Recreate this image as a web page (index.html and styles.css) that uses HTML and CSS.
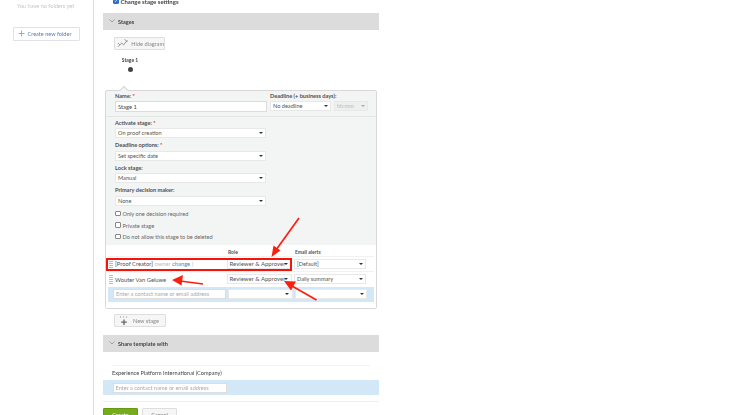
FILE: index.html
```html
<!DOCTYPE html>
<html lang="en">
<head>
<meta charset="utf-8">
<title>Template</title>
<link rel="stylesheet" href="styles.css">
</head>
<body>
<div class="page">
  <aside class="sidebar">
    <p class="no-folders">You have no folders yet</p>
    <button class="create-folder"><svg class="plus" viewBox="0 0 7 7" width="7" height="7"><path d="M3.500 .5v6M.5 3.500h6" stroke="#8aa5cf" stroke-width=".9"/></svg>Create new folder</button>
  </aside>
  <main class="content">
    <label class="top-check"><span class="check on"><svg viewBox="0 0 6 6" width="6" height="6"><path d="M1 3l1.500 1.500L5 1.500" fill="none" stroke="#fff" stroke-width="1"/></svg></span>Change stage settings</label>
    <div class="bar"><svg class="chev" viewBox="0 0 6 4" width="6" height="4"><path d="M.5 .5L3 3 5.500 .5" fill="none" stroke="#888" stroke-width=".7"/></svg>Stages</div>
    <button class="tool hide-diagram"><svg viewBox="0 0 12 10" width="12" height="10"><path d="M1 9L5 5 7 7 11 2M1 5l2 2M8 1l3 3" fill="none" stroke="#777" stroke-width=".8"/></svg>Hide diagram</button>
    <div class="diagram"><span class="stage-name">Stage 1</span><span class="dot"></span></div>
    <section class="panel">
      <span class="notch"></span>
      <div class="panel-top">
        <div class="col-name">
          <div class="lbl">Name: <i>*</i></div>
          <div class="name-input">Stage 1</div>
        </div>
        <div class="col-deadline">
          <div class="lbl">Deadline (+ business days):</div>
          <div class="deadline-row">
            <div class="sel w-dead">No deadline<b></b></div>
            <div class="sel w-time off">hh:mm<b></b></div>
          </div>
        </div>
      </div>
      <div class="panel-mid">
        <div class="lbl">Activate stage: <i>*</i></div>
        <div class="sel w-main">On proof creation<b></b></div>
        <div class="lbl">Deadline options: <i>*</i></div>
        <div class="sel w-main">Set specific date<b></b></div>
        <div class="lbl">Lock stage:</div>
        <div class="sel w-main">Manual<b></b></div>
        <div class="lbl">Primary decision maker:</div>
        <div class="sel w-main last">None<b></b></div>
        <label class="opt"><span class="check"></span>Only one decision required</label>
        <label class="opt"><span class="check"></span>Private stage</label>
        <label class="opt"><span class="check"></span>Do not allow this stage to be deleted</label>
      </div>
      <div class="people">
        <div class="people-head"><span class="h-role">Role</span><span class="h-alert">Email alerts</span></div>
        <div class="person">
          <span class="grip"></span>
          <span class="who">[Proof Creator] <em>owner</em> <a>change</a> <em>)</em></span>
          <div class="sel w-role">Reviewer &amp; Approver<b></b></div>
          <div class="sel w-alert">[Default]<b></b></div>
        </div>
        <div class="person">
          <span class="grip"></span>
          <span class="who">Wouter Van Geluwe</span>
          <div class="sel w-role">Reviewer &amp; Approver<b></b></div>
          <div class="sel w-alert">Daily summary<b></b></div>
        </div>
        <div class="person add">
          <div class="contact w-contact">Enter a contact name or email address</div>
          <div class="sel w-role"><b></b></div>
          <div class="sel w-alert"><b></b></div>
        </div>
      </div>
    </section>
    <button class="tool new-stage"><svg viewBox="0 0 10 10" width="10" height="10"><path d="M1 1h1M4 1h1M7 1h1" stroke="#777" stroke-width=".8"/><path d="M5 3.500v5.500M2.200 6.200h5.600" stroke="#666" stroke-width="1.300"/></svg>New stage</button>
    <div class="bar share-bar"><svg class="chev" viewBox="0 0 6 4" width="6" height="4"><path d="M.5 .5L3 3 5.500 .5" fill="none" stroke="#888" stroke-width=".7"/></svg>Share template with</div>
    <div class="company">Experience Platform International (Company)</div>
    <div class="share-row"><div class="contact w-share">Enter a contact name or email address</div></div>
    <div class="actions">
      <button class="btn-create">Create</button>
      <button class="btn-cancel">Cancel</button>
    </div>
    <div class="overlay-box"></div>
    <svg class="arrows" viewBox="0 0 750 415" width="750" height="415">
      <g stroke="#fb1f10" stroke-width="1.700" fill="#fb1f10">
        <path d="M299 218L276 250" fill="none"/><path d="M271.500 257l2-11.500 7 5z" stroke="none"/>
        <path d="M203 284L180 281" fill="none"/><path d="M172 280l11-5-1.500 10.500z" stroke="none"/>
        <path d="M316.500 300L292 286" fill="none"/><path d="M284 281l12 .5-5 9z" stroke="none"/>
      </g>
    </svg>
  </main>
</div>
</body>
</html>
```
FILE: styles.css
```css
* { box-sizing: border-box; }
html, body { margin: 0; height: 415px; overflow: hidden; background: #fff; }
body { font: 5.600px/7px Lato, "Liberation Sans", sans-serif; color: #444; }
button { font: inherit; padding: 0; cursor: pointer; }
.page { display: flex; height: 415px; width: 750px; overflow: hidden; filter: blur(.35px); }
.sidebar { width: 93.500px; flex: none; height: 415px; border-right: 1.500px solid #dcdcdc; padding-top: 3px; }
.no-folders { margin: 0 0 0 17px; color: #c6c6c6; line-height: 6px; }
.create-folder { display: flex; align-items: center; margin: 18px 0 0 13px; width: 67px; height: 13.500px; border: 1px solid #dfe3e8; background: #fff; color: #5b7db5; border-radius: 1px; padding-left: 4px; }
.plus { margin-right: 2.500px; flex: none; }
.content { position: relative; width: 276px; margin-left: 9.500px; flex: none; }
.top-check { display: flex; align-items: center; height: 6px; margin: -2px 0 0 10px; font-weight: 700; font-size: 6px; color: #444; }
.check { width: 5.500px; height: 5.500px; border: .7px solid #888; border-radius: 1px; background: #fff; margin-right: 2px; flex: none; display: block; }
.check.on { background: #2f6fd0; border-color: #2f6fd0; display: flex; }
.check.on svg { width: 100%; height: 100%; }
.bar { display: flex; align-items: center; height: 17.500px; margin-top: 8.500px; background: #dcdcdc; padding-left: 6px; font-weight: 700; color: #444; }
.chev { margin-right: 3px; }
.tool { display: flex; align-items: center; gap: 3px; border: 1px solid #dedede; background: #f6f6f6; color: #888; border-radius: 1px; white-space: nowrap; }
.hide-diagram { margin: 6.500px 0 0 11px; width: 51px; height: 13px; padding-left: 2px; }
.diagram { display: flex; flex-direction: column; align-items: center; width: 20px; margin: 8px 0 0 17px; height: 32px; }
.stage-name { font-size: 5px; line-height: 5px; font-weight: 700; white-space: nowrap; }
.dot { width: 5px; height: 5px; border-radius: 50%; background: #444; margin-top: 4px; }
.panel { position: relative; margin-left: 2px; width: 272px; height: 219.500px; border: 1px solid #d8d8d8; border-radius: 2px; background: #f3f4f4; }
.notch { position: absolute; left: 15px; top: -3.500px; width: 6px; height: 6px; background: #f3f4f4; border: solid #d8d8d8; border-width: 1px 0 0 1px; transform: rotate(45deg); }
.panel-top { display: flex; height: 26.500px; border-bottom: 1px solid #e3e4e4; padding: 1.500px 0 0 9px; }
.lbl { font-weight: 700; color: #505050; line-height: 7px; height: 9.500px; white-space: nowrap; }
.lbl i { color: #d33; font-style: normal; }
.panel-top .lbl { height: 7.500px; }
.col-name { width: 155px; }
.name-input { width: 151.500px; height: 11px; border: 1px solid #dcdcdc; background: #fff; margin-top: 1.500px; padding-left: 2px; line-height: 9px; font-size: 5.800px; color: #444; }
.deadline-row { display: flex; gap: 3px; margin-top: 1px; }
.sel { position: relative; height: 10px; background: #fff; border: 1px solid #e8e8e8; line-height: 8px; padding-left: 2px; color: #555; white-space: nowrap; }
.sel b { position: absolute; right: 2.500px; top: 3px; border: 2px solid transparent; border-top: 2.500px solid #333; border-bottom: 0; }
.sel.off { background: #eeefef; color: #bbb; }
.sel.off b { border-top-color: #aaa; }
.w-dead { width: 61px; }
.w-time { width: 34px; }
.w-main { width: 151px; margin-bottom: 3.100px; }
.w-main.last { margin-bottom: 2px; }
.panel-mid { padding: 1.500px 0 0 9px; height: 127.500px; }
.opt { display: flex; align-items: center; height: 11.500px; color: #666; }
.people { background: #fff; height: 63.500px; padding: 3px 2px 0; }
.people-head { position: relative; height: 8px; font-weight: 700; font-size: 5px; color: #555; }
.h-role { position: absolute; left: 120px; top: 1px; }
.h-alert { position: absolute; left: 187px; top: 1px; }
.person { display: flex; align-items: center; height: 15.500px; border-top: 1px solid #f1f1f1; }
.person.add { background: #d2e8f6; border: 0; height: 15px; padding-left: 5px; }
.grip { width: 4px; height: 9px; margin: 0 2px 0 1px; flex: none; background: repeating-linear-gradient(#bbb 0 1px, transparent 1px 2px); }
.who { width: 111.500px; flex: none; color: #505050; font-size: 5.800px; white-space: nowrap; }
.who em { font-style: normal; color: #bbb; }
.who a { color: #3f88c5; }
.w-role { width: 65px; flex: none; font-size: 6px; }
.w-alert { width: 72px; flex: none; margin-left: 2.500px; }
.contact { height: 10px; background: #fff; border: 1px solid #ddd; color: #aaa; line-height: 8px; padding-left: 2px; white-space: nowrap; }
.w-contact { width: 112.500px; margin-right: 2px; flex: none; }
.new-stage { margin: 5px 0 0 11px; width: 52px; height: 13px; padding-left: 4px; gap: 4px; }
.new-stage svg { flex: none; }
.share-bar { margin-top: 7.500px; }
.company { margin: 12.500px 9px 0; height: 15px; border-top: 1px solid #f3f3f3; padding-top: 3px; color: #444; }
.share-row { height: 15px; background: #d2e8f6; padding: 3px 0 0 9.500px; }
.w-share { width: 114px; }
.actions { display: flex; gap: 4px; margin-top: 6.500px; padding-top: 5.500px; border-top: 1.500px solid #f0f0f0; }
.btn-create { width: 35px; height: 14px; background: #76ac1c; border: 1px solid #679a14; color: #fff; border-radius: 1px; }
.btn-cancel { width: 35px; height: 14px; background: #f6f6f6; border: 1px solid #dedede; color: #777; border-radius: 1px; }
.overlay-box { position: absolute; left: 3px; top: 257.500px; width: 186px; height: 13px; border: 2px solid #f5130a; }
.arrows { position: absolute; left: -103px; top: 0; pointer-events: none; }
```
